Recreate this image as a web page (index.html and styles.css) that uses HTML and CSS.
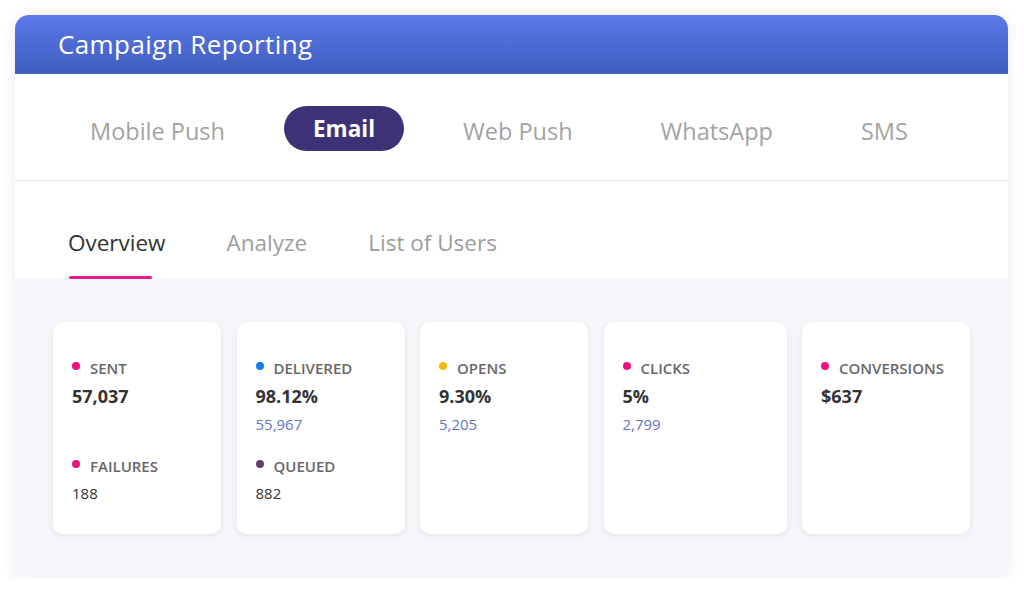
FILE: index.html
```html
<!DOCTYPE html>
<html>
<head>
<meta charset="utf-8">
<link rel="stylesheet" href="styles.css">
</head>
<body>
<div class="panel">
  <div class="header">Campaign Reporting</div>
  <div class="channels">
    <span class="channel">Mobile Push</span>
    <span class="channel active">Email</span>
    <span class="channel">Web Push</span>
    <span class="channel">WhatsApp</span>
    <span class="channel">SMS</span>
  </div>
  <div class="subtabs">
    <div class="subtab active"><span>Overview</span><i class="bar"></i></div>
    <div class="subtab"><span>Analyze</span></div>
    <div class="subtab"><span>List of Users</span></div>
  </div>
  <div class="stats">
    <div class="card">
      <div class="group">
        <div class="label"><i class="dot pink"></i>SENT</div>
        <div class="value">57,037</div>
      </div>
      <div class="group">
        <div class="label"><i class="dot pink"></i>FAILURES</div>
        <div class="plain">188</div>
      </div>
    </div>
    <div class="card">
      <div class="group">
        <div class="label"><i class="dot blue"></i>DELIVERED</div>
        <div class="value">98.12%</div>
        <div class="sub">55,967</div>
      </div>
      <div class="group">
        <div class="label"><i class="dot purple"></i>QUEUED</div>
        <div class="plain">882</div>
      </div>
    </div>
    <div class="card">
      <div class="group">
        <div class="label"><i class="dot yellow"></i>OPENS</div>
        <div class="value">9.30%</div>
        <div class="sub">5,205</div>
      </div>
    </div>
    <div class="card">
      <div class="group">
        <div class="label"><i class="dot pink"></i>CLICKS</div>
        <div class="value">5%</div>
        <div class="sub">2,799</div>
      </div>
    </div>
    <div class="card">
      <div class="group">
        <div class="label"><i class="dot pink"></i>CONVERSIONS</div>
        <div class="value">$637</div>
      </div>
    </div>
  </div>
</div>
</body>
</html>
```

FILE: styles.css
```css
* { box-sizing: border-box; }
html, body { margin: 0; background: #ffffff; }
body {
  padding: 15px 16px 0 15px;
  font-family: "Open Sans", "Liberation Sans", sans-serif;
}
.panel {
  width: 993px;
  border-radius: 14px;
  background: #ffffff;
  box-shadow: 0 2px 14px rgba(30, 40, 70, 0.10);
  overflow: hidden;
}
.header {
  height: 59px;
  display: flex;
  align-items: center;
  padding: 0 0 2px 43px;
  background: linear-gradient(180deg, #5b79ea 0%, #3f5dbe 100%);
  color: #ffffff;
  font-size: 26px;
  font-weight: 500;
  letter-spacing: 0.4px;
}
.channels {
  display: flex;
  align-items: center;
  gap: 30px;
  padding: 32px 0 29px 46px;
  border-bottom: 1px solid #e3e6ec;
}
.channel {
  padding: 5px 29px 0 29px;
  height: 45px;
  display: flex;
  align-items: center;
  font-size: 23.5px;
  color: #a3a3a3;
}
.channel.active {
  background: #3d3276;
  color: #ffffff;
  font-weight: 700;
  border-radius: 23px;
  padding-top: 0;
  font-size: 22.5px;
}
.subtabs {
  display: flex;
  gap: 61px;
  padding: 47px 0 0 53px;
  height: 98px;
}
.subtab {
  display: flex;
  flex-direction: column;
  font-size: 22.5px;
  color: #9d9d9d;
  line-height: 30px;
}
.subtab.active { color: #333333; }
.bar {
  display: block;
  width: 83px;
  height: 3px;
  margin: 18px 0 0 1px;
  border-radius: 2px;
  background: #e8198b;
}
.stats {
  background: #f4f6f9;
  padding: 43px 38px 44px 38px;
  display: grid;
  grid-template-columns: 168px 168px 168px 183px 168px;
  column-gap: 15.5px;
}
.card {
  height: 212px;
  background: #ffffff;
  border-radius: 10px;
  box-shadow: 0 2px 6px rgba(30, 40, 70, 0.08);
  padding: 36px 10px 0 19px;
}
.group { min-height: 98px; }
.label {
  display: flex;
  align-items: center;
  font-size: 15px;
  font-weight: 600;
  color: #686868;
  line-height: 20px;
}
.dot {
  width: 8px;
  height: 8px;
  border-radius: 50%;
  margin: -5px 10px 0 0;
  flex: none;
}
.pink { background: #f0107f; }
.blue { background: #167ee8; }
.yellow { background: #f7b90b; }
.purple { background: #6b3a78; }
.value {
  margin-top: 7px;
  font-size: 18px;
  font-weight: 700;
  color: #333333;
  line-height: 22px;
}
.sub {
  margin-top: 7px;
  font-size: 15px;
  color: #6472c6;
  line-height: 20px;
}
.plain {
  margin-top: 7px;
  font-size: 15px;
  color: #333333;
  line-height: 20px;
}
```
